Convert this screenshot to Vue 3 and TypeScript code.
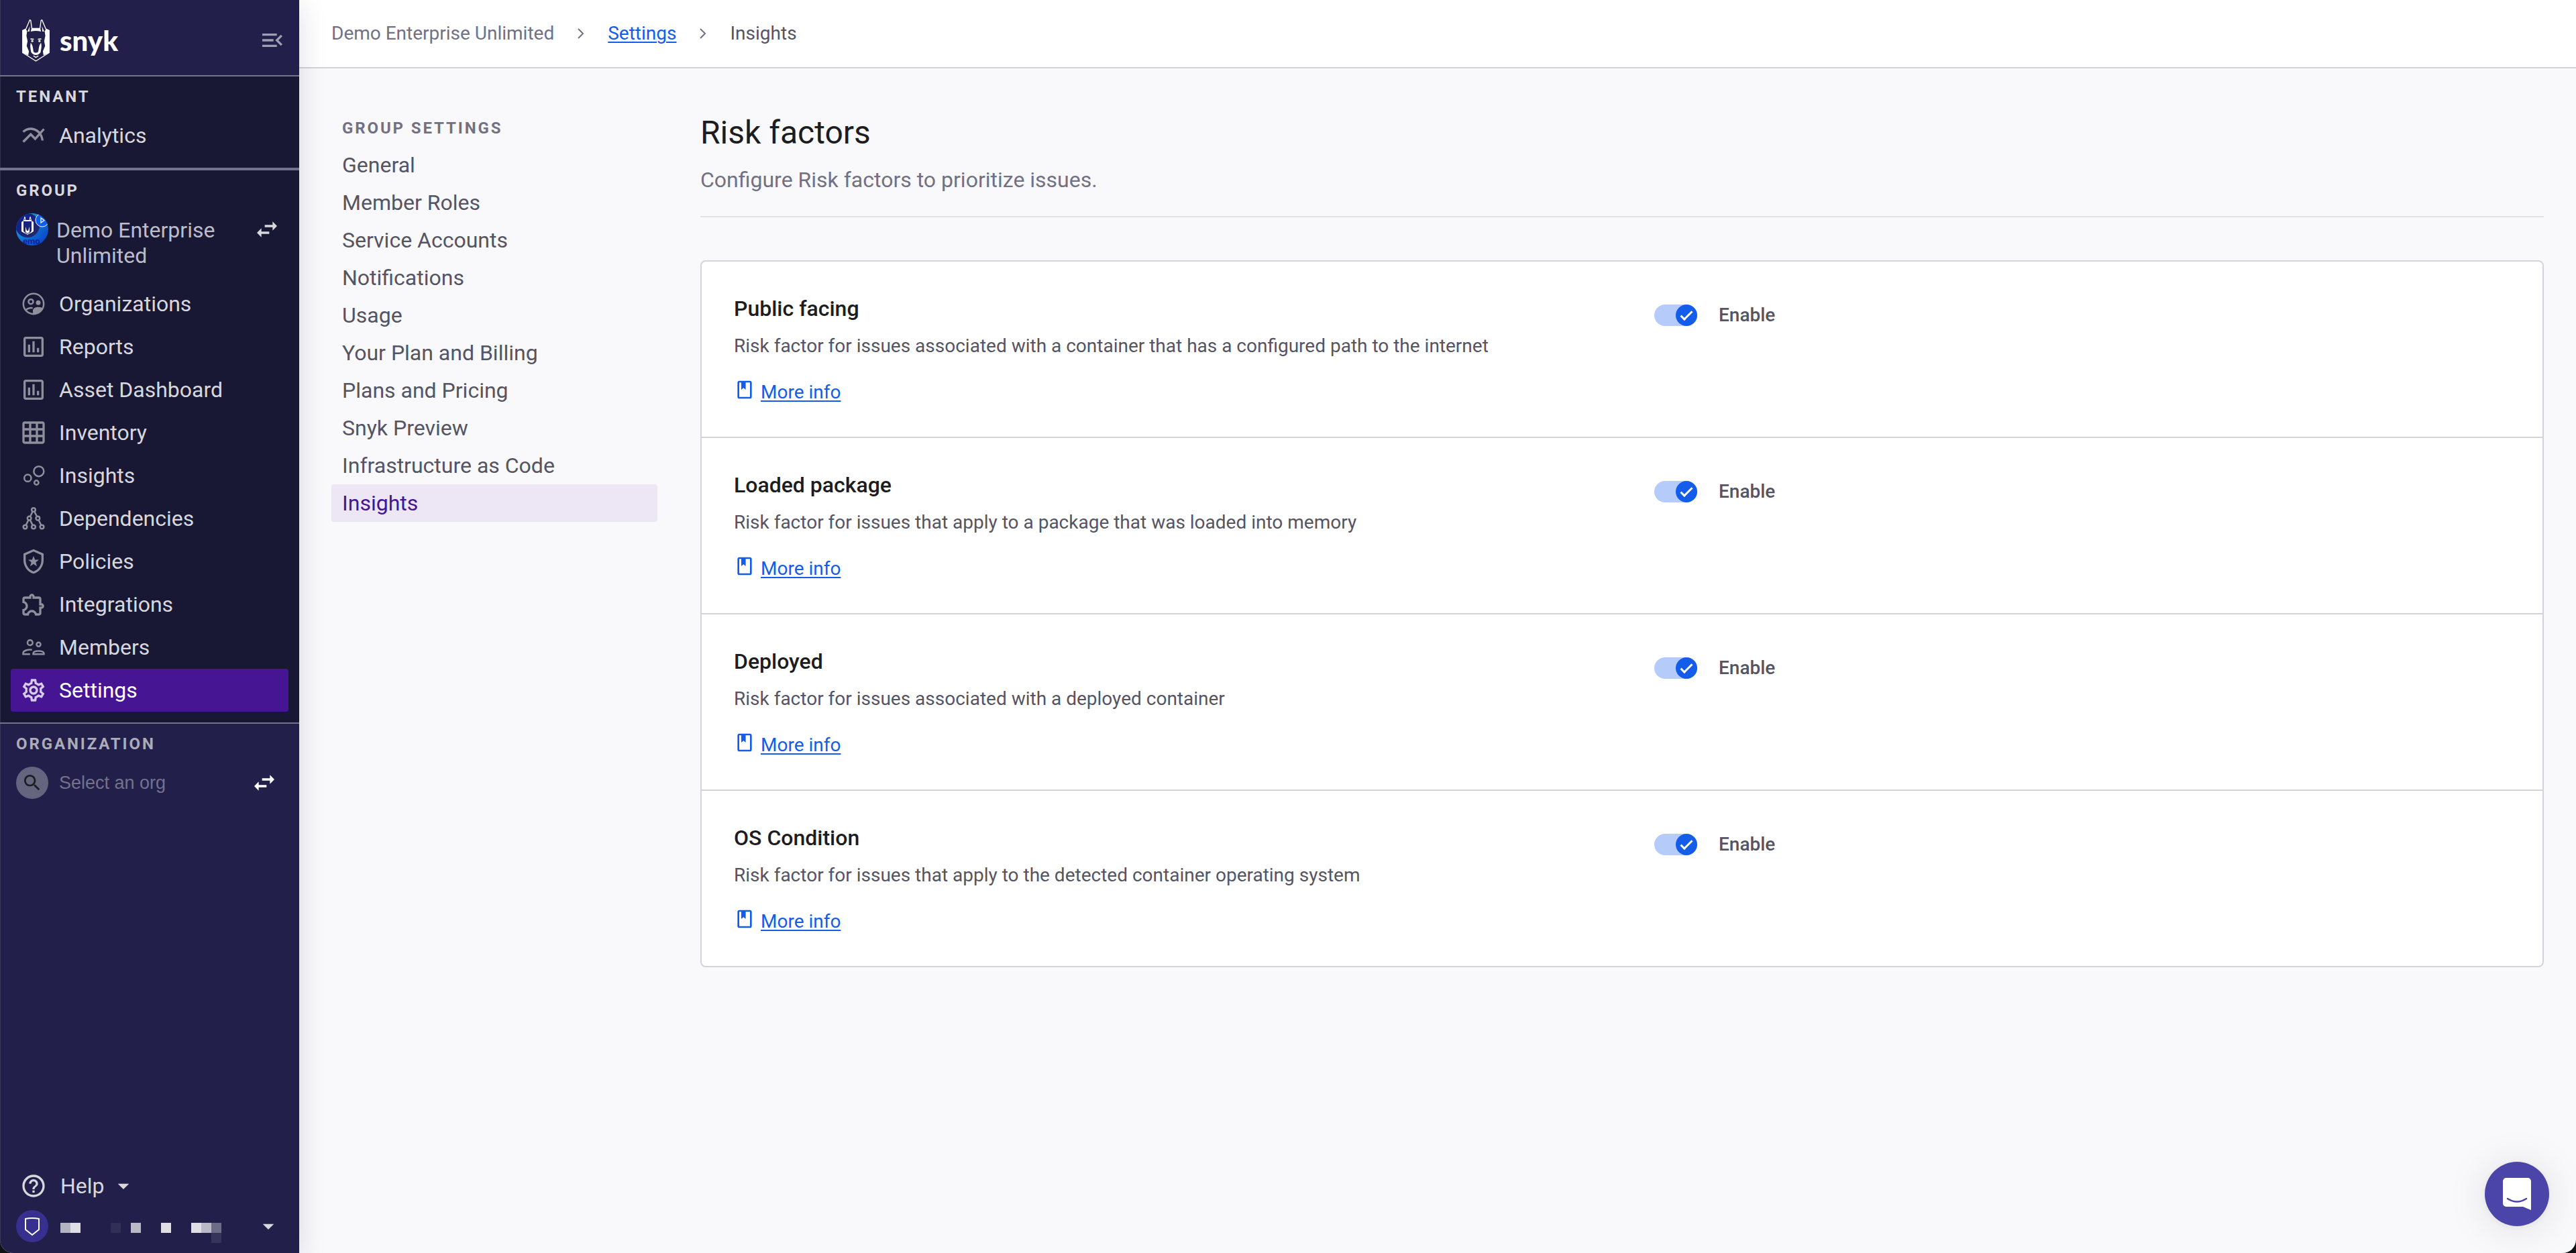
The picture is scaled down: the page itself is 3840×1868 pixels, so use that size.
<script setup lang="ts">
import { reactive } from 'vue'

interface Icon {
  fill?: string
  stroke?: string
}

interface NavItem {
  label: string
  icon: string
  active?: boolean
}

interface RiskFactor {
  id: string
  title: string
  description: string
  enabled: boolean
}

const ring = (x: number, y: number, r: number): string =>
  `M${x - r} ${y}a${r} ${r} 0 1 0 ${2 * r} 0a${r} ${r} 0 1 0 ${-2 * r} 0z`

const icons: Record<string, Icon> = {
  chart: {
    fill: 'M22 6.92l-1.41-1.41-2.85 3.21C15.68 6.4 12.83 5 9.61 5 6.72 5 4.07 6.16 2 8l1.42 1.42C5.12 7.93 7.27 7 9.61 7c2.74 0 5.09 1.26 6.77 3.24l-2.88 3.24-4-4L2 16.99l1.5 1.5 6-6.01 4 4 4.05-4.55c.75 1.35 1.25 2.9 1.44 4.55H21c-.22-2.3-.95-4.39-2.04-6.14L22 6.92z',
  },
  orgs: {
    fill:
      ring(16.2, 11, 2.1) +
      'M11.4 21.4v-3.3c0-2.1 2.4-3.2 4.8-3.2 1.9 0 3.4.4 4.4 1.3-1.4 3.2-4.8 5.3-9.2 5.2z',
    stroke: ring(12, 12, 9.1) + ring(9.6, 10, 2.1) + 'M5.2 17.6c1.2-1.4 3.2-2.1 6-1.9',
  },
  report: {
    fill: 'M9 17H7v-7h2v7zm4 0h-2V7h2v10zm4 0h-2v-4h2v4zm2 2H5V5h14v14zm0-16H5c-1.1 0-2 .9-2 2v14c0 1.1.9 2 2 2h14c1.1 0 2-.9 2-2V5c0-1.1-.9-2-2-2z',
  },
  grid: {
    fill: 'M20 2H4c-1.1 0-2 .9-2 2v16c0 1.1.9 2 2 2h16c1.1 0 2-.9 2-2V4c0-1.1-.9-2-2-2zM8 20H4v-4h4v4zm0-6H4v-4h4v4zm0-6H4V4h4v4zm6 12h-4v-4h4v4zm0-6h-4v-4h4v4zm0-6h-4V4h4v4zm6 12h-4v-4h4v4zm0-6h-4v-4h4v4zm0-6h-4V4h4v4z',
  },
  bubbles: { stroke: ring(16.7, 8.2, 4.5) + ring(6.8, 14.2, 3.1) + ring(14.6, 18.3, 1.9) },
  tree: {
    stroke:
      ring(12, 4.2, 1.7) + ring(8.2, 11.8, 1.7) + ring(15.8, 11.8, 1.7) +
      ring(4.5, 19.5, 1.7) + ring(12, 19.5, 1.7) + ring(19.5, 19.5, 1.7) +
      'M11.2 5.8L9 10.2M12.8 5.8L15 10.2M7.4 13.4L5.3 17.9M9 13.4L11.2 17.9M16.6 13.4L18.7 17.9',
  },
  shield: {
    fill:
      'M12 1L3 5v6c0 5.55 3.84 10.74 9 12 5.16-1.26 9-6.45 9-12V5l-9-4zm7 10c0 4.52-2.98 8.69-7 9.93-4.02-1.24-7-5.41-7-9.93V6.3l7-3.11 7 3.11V11z' +
      'M12 7.1l1.3 3.4h3.5l-2.8 2.2 1 3.6-3-2.1-3 2.1 1-3.6-2.8-2.2h3.5z',
  },
  puzzle: {
    fill: 'M10.5 4.5c.28 0 .5.22.5.5v2h6v6h2c.28 0 .5.22.5.5s-.22.5-.5.5h-2v6h-2.12c-.68-1.75-2.39-3-4.38-3s-3.7 1.25-4.38 3H4v-2.12c1.75-.68 3-2.39 3-4.38 0-1.99-1.24-3.7-2.99-4.38L4 7h6V5c0-.28.22-.5.5-.5m0-2C9.12 2.5 8 3.62 8 5H4c-1.1 0-1.99.9-1.99 2v3.8h.29c1.49 0 2.7 1.21 2.7 2.7s-1.21 2.7-2.7 2.7H2V20c0 1.1.9 2 2 2h3.8v-.3c0-1.49 1.21-2.7 2.7-2.7s2.7 1.21 2.7 2.7v.3H17c1.1 0 2-.9 2-2v-4c1.38 0 2.5-1.12 2.5-2.5S20.38 11 19 11V7c0-1.1-.9-2-2-2h-4c0-1.38-1.12-2.5-2.5-2.5z',
  },
  people: {
    stroke:
      ring(8.9, 7.9, 2.3) + ring(16.5, 9.5, 1.8) +
      'M10.6 14.2C7 13.7 2.7 15 2.7 17.3v.9h6.2M11.7 18.2v-.7c0-3 9.6-3 9.6 0v.7z',
  },
  gear: {
    fill: 'M19.43 12.98c.04-.32.07-.64.07-.98 0-.34-.03-.66-.07-.98l2.11-1.65c.19-.15.24-.42.12-.64l-2-3.46c-.09-.16-.26-.25-.44-.25-.06 0-.12.01-.17.03l-2.49 1c-.52-.4-1.08-.73-1.69-.98l-.38-2.65C14.46 2.18 14.25 2 14 2h-4c-.25 0-.46.18-.49.42l-.38 2.65c-.61.25-1.17.59-1.69.98l-2.49-1c-.06-.02-.12-.03-.18-.03-.17 0-.34.09-.43.25l-2 3.46c-.13.22-.07.49.12.64l2.11 1.65c-.04.32-.07.65-.07.98 0 .33.03.66.07.98l-2.11 1.65c-.19.15-.24.42-.12.64l2 3.46c.09.16.26.25.44.25.06 0 .12-.01.17-.03l2.49-1c.52.4 1.08.73 1.69.98l.38 2.65c.03.24.24.42.49.42h4c.25 0 .46-.18.49-.42l.38-2.65c.61-.25 1.17-.59 1.69-.98l2.49 1c.06.02.12.03.18.03.17 0 .34-.09.43-.25l2-3.46c.12-.22.07-.49-.12-.64l-2.11-1.65zm-1.98-1.71c.04.31.05.52.05.73 0 .21-.02.43-.05.73l-.14 1.13.89.7 1.08.84-.7 1.21-1.27-.51-1.04-.42-.9.68c-.43.32-.84.56-1.25.73l-1.06.43-.16 1.13-.2 1.35h-1.4l-.19-1.35-.16-1.13-1.06-.43c-.43-.18-.83-.41-1.23-.71l-.91-.7-1.06.43-1.27.51-.7-1.21 1.08-.84.89-.7-.14-1.13c-.03-.31-.05-.54-.05-.74s.02-.43.05-.73l.14-1.13-.89-.7-1.08-.84.7-1.21 1.27.51 1.04.42.9-.68c.43-.32.84-.56 1.25-.73l1.06-.43.16-1.13.2-1.35h1.39l.19 1.35.16 1.13 1.06.43c.43.18.83.41 1.23.71l.91.7 1.06-.43 1.27-.51.7 1.21-1.07.85-.89.7.14 1.13zM12 8c-2.21 0-4 1.79-4 4s1.79 4 4 4 4-1.79 4-4-1.79-4-4-4zm0 6c-1.1 0-2-.9-2-2s.9-2 2-2 2 .9 2 2-.9 2-2 2z',
  },
}

const swapPath = 'M6.99 11L3 15l3.99 4v-3H14v-2H6.99v-3zM21 9l-3.99-4v3H10v2h7.01v3L21 9z'

const groupNav: NavItem[] = [
  { label: 'Organizations', icon: 'orgs' },
  { label: 'Reports', icon: 'report' },
  { label: 'Asset Dashboard', icon: 'report' },
  { label: 'Inventory', icon: 'grid' },
  { label: 'Insights', icon: 'bubbles' },
  { label: 'Dependencies', icon: 'tree' },
  { label: 'Policies', icon: 'shield' },
  { label: 'Integrations', icon: 'puzzle' },
  { label: 'Members', icon: 'people' },
  { label: 'Settings', icon: 'gear', active: true },
]

const settingsNav: string[] = [
  'General',
  'Member Roles',
  'Service Accounts',
  'Notifications',
  'Usage',
  'Your Plan and Billing',
  'Plans and Pricing',
  'Snyk Preview',
  'Infrastructure as Code',
  'Insights',
]
const currentSetting = 'Insights'

const factors = reactive<RiskFactor[]>([
  {
    id: 'public-facing',
    title: 'Public facing',
    description: 'Risk factor for issues associated with a container that has a configured path to the internet',
    enabled: true,
  },
  {
    id: 'loaded-package',
    title: 'Loaded package',
    description: 'Risk factor for issues that apply to a package that was loaded into memory',
    enabled: true,
  },
  {
    id: 'deployed',
    title: 'Deployed',
    description: 'Risk factor for issues associated with a deployed container',
    enabled: true,
  },
  {
    id: 'os-condition',
    title: 'OS Condition',
    description: 'Risk factor for issues that apply to the detected container operating system',
    enabled: true,
  },
])

// Blocks of the masked user name: x, y, opacity
const maskBlocks: [number, number, number][] = [
  [0, 19, 0.66], [15, 19, 0.86], [75, 19, 0.07], [105, 19, 0.69], [150, 19, 0.86],
  [195, 19, 0.86], [210, 19, 0.69], [225, 19, 0.34], [225, 34, 0.09],
]
</script>

<template>
  <div class="app">
    <aside class="sidebar">
      <div class="brand">
        <a href="#" class="logo" aria-label="Snyk home">
          <svg class="logo-mark" viewBox="0 0 122 188" aria-hidden="true">
            <g fill="#fff">
              <path d="M0 48L14 41 22 52 19 72 24 96 20 118 30 142 27 160 0 148z" />
              <path d="M122 48L108 41 100 52 103 72 98 96 102 118 92 142 95 160 122 148z" />
              <path d="M42 38H80L84 54C70 50 52 50 38 54z" />
              <path d="M38 104C46 112 48 126 50 142 53 151 69 151 72 142 74 126 76 112 84 104 88 122 84 134 82 146 76 154 70 158 61 158 52 158 46 154 40 146 38 134 34 122 38 104z" />
              <path d="M24 54L34 30 32 54zM98 54L88 30 90 54z" />
              <path d="M38 84L52 86 52 90 36 89zM84 84L70 86 70 90 86 89z" />
            </g>
            <g fill="none" stroke="#fff" stroke-width="4">
              <path d="M1 147L61 185 121 147" />
              <path d="M15 46L34 2 38 4 43 40M107 46L88 2 84 4 79 40" />
              <path d="M50 162L61 169 72 162" />
              <circle cx="45" cy="96" r="3" />
              <circle cx="77" cy="96" r="3" />
            </g>
          </svg>
          <span class="logo-word">snyk</span>
        </a>
        <button type="button" class="icon-button collapse" aria-label="Collapse navigation">
          <svg class="icon" viewBox="0 0 24 24"><path d="M3 18h13v-2H3v2zm0-5h10v-2H3v2zm0-7v2h13V6H3zm18 9.59L17.42 12 21 8.41 19.59 7l-5 5 5 5L21 15.59z" /></svg>
        </button>
      </div>

      <section class="nav-section tenant">
        <h2 class="nav-title">TENANT</h2>
        <nav class="nav-list">
          <a href="#" class="nav-item">
            <svg class="icon" viewBox="0 0 24 24"><path :d="icons.chart.fill" /></svg>
            <span>Analytics</span>
          </a>
        </nav>
      </section>

      <section class="nav-section group">
        <h2 class="nav-title">GROUP</h2>
        <div class="group-picker">
          <svg class="avatar" viewBox="0 0 48 48" aria-hidden="true">
            <defs>
              <clipPath id="avatar-clip"><circle cx="24" cy="24" r="24" /></clipPath>
              <linearGradient id="avatar-sky" x1="0" y1="0" x2="1" y2="1">
                <stop offset="0" stop-color="#17b4e8" />
                <stop offset="1" stop-color="#0b35c4" />
              </linearGradient>
              <linearGradient id="avatar-disc" x1="0" y1="0" x2="1" y2="1">
                <stop offset="0" stop-color="#0a1f9e" />
                <stop offset="1" stop-color="#2a2a5c" />
              </linearGradient>
            </defs>
            <g clip-path="url(#avatar-clip)">
              <rect width="48" height="48" fill="url(#avatar-sky)" />
              <circle cx="17" cy="18" r="18" fill="url(#avatar-disc)" />
              <circle cx="39" cy="10" r="10" fill="#0f5fef" stroke="#fff" stroke-width="1" />
              <path d="M37 7v7l5-3.500z" fill="none" stroke="#fff" stroke-width="1.200" />
              <path d="M8 13l3-2v15l2 4-5-3zM26 13l-3-2v15l-2 4 5-3zM12 10h10v2H12zM14 20l2 6h2l2-6v8l-3 2-3-2z" fill="#fff" />
              <path d="M11 12l2-7 1 6M23 12l-2-7-1 6M8 26l9 5.500 9-5.500" fill="none" stroke="#fff" />
              <text x="10" y="46" font-size="13" font-weight="700" fill="#0a1f9e">emo</text>
            </g>
          </svg>
          <span class="group-name">Demo Enterprise Unlimited</span>
          <button type="button" class="icon-button" aria-label="Switch group">
            <svg class="icon" viewBox="0 0 24 24"><path :d="swapPath" /></svg>
          </button>
        </div>
        <nav class="nav-list">
          <a
            v-for="item in groupNav"
            :key="item.label"
            href="#"
            class="nav-item"
            :class="{ active: item.active }"
          >
            <svg class="icon" viewBox="0 0 24 24">
              <path v-if="icons[item.icon].fill" :d="icons[item.icon].fill" />
              <path v-if="icons[item.icon].stroke" class="line" :d="icons[item.icon].stroke" />
            </svg>
            <span>{{ item.label }}</span>
          </a>
        </nav>
      </section>

      <section class="nav-section organization">
        <h2 class="nav-title">ORGANIZATION</h2>
        <div class="org-picker">
          <label class="org-search" for="org-search" aria-label="Select an org">
            <svg viewBox="0 0 24 24"><path d="M15.5 14h-.79l-.28-.27C15.41 12.59 16 11.11 16 9.5 16 5.91 13.09 3 9.5 3S3 5.91 3 9.5 5.91 16 9.5 16c1.61 0 3.09-.59 4.23-1.57l.27.28v.79l5 4.99L20.49 19l-4.99-5zm-6 0C7.01 14 5 11.99 5 9.5S7.01 5 9.5 5 14 7.01 14 9.5 11.99 14 9.5 14z" /></svg>
          </label>
          <input id="org-search" class="org-input" type="text" placeholder="Select an org" />
          <button type="button" class="icon-button bright" aria-label="Switch organization">
            <svg class="icon" viewBox="0 0 24 24"><path :d="swapPath" /></svg>
          </button>
        </div>
      </section>

      <div class="sidebar-footer">
        <button type="button" class="help">
          <svg class="icon" viewBox="0 0 24 24"><path d="M11 18h2v-2h-2v2zm1-16C6.48 2 2 6.48 2 12s4.48 10 10 10 10-4.48 10-10S17.52 2 12 2zm0 18c-4.41 0-8-3.59-8-8s3.59-8 8-8 8 3.59 8 8-3.59 8-8 8zm0-14c-2.21 0-4 1.79-4 4h2c0-1.1.9-2 2-2s2 .9 2 2c0 2-3 1.75-3 5h2c0-2.25 3-2.5 3-5 0-2.21-1.79-4-4-4z" /></svg>
          <span>Help</span>
          <svg class="icon caret" viewBox="0 0 24 24"><path d="M7 10l5 5 5-5z" /></svg>
        </button>
        <button type="button" class="user" aria-label="User menu">
          <svg class="user-avatar" viewBox="0 0 48 48">
            <circle cx="24" cy="24" r="24" fill="#38308f" />
            <path d="M14 13Q24 11 34 13V29L24 37 14 29z" fill="none" stroke="#fff" stroke-width="2" />
          </svg>
          <svg class="user-name" viewBox="0 0 240 49">
            <rect
              v-for="[x, y, o] in maskBlocks"
              :key="`${x}-${y}`"
              :x="x"
              :y="y"
              width="15"
              height="15"
              fill="#fff"
              :fill-opacity="o"
            />
          </svg>
          <svg class="icon" viewBox="0 0 24 24"><path d="M7 10l5 5 5-5z" /></svg>
        </button>
      </div>
    </aside>

    <div class="page">
      <header class="topbar">
        <nav class="breadcrumbs" aria-label="Breadcrumb">
          <span class="crumb">Demo Enterprise Unlimited</span>
          <svg class="chevron" viewBox="0 0 12 18"><path d="M2 2l7 7-7 7" /></svg>
          <a href="#" class="link">Settings</a>
          <svg class="chevron" viewBox="0 0 12 18"><path d="M2 2l7 7-7 7" /></svg>
          <span class="crumb current">Insights</span>
        </nav>
      </header>

      <div class="body">
        <nav class="settings-nav" aria-label="Group settings">
          <h2 class="settings-title">GROUP SETTINGS</h2>
          <a
            v-for="label in settingsNav"
            :key="label"
            href="#"
            class="settings-item"
            :class="{ active: label === currentSetting }"
          >{{ label }}</a>
        </nav>

        <main class="content">
          <div class="intro">
            <h1>Risk factors</h1>
            <p>Configure Risk factors to prioritize issues.</p>
          </div>

          <div class="card">
            <section v-for="factor in factors" :key="factor.id" class="factor">
              <div class="factor-text">
                <h2>{{ factor.title }}</h2>
                <p>{{ factor.description }}</p>
                <div class="more">
                  <svg viewBox="0 0 24 24" aria-hidden="true"><path fill-rule="evenodd" d="M18 2H6c-1.1 0-2 .9-2 2v16c0 1.1.9 2 2 2h12c1.1 0 2-.9 2-2V4c0-1.1-.9-2-2-2zM6 4h2.2v8l2.500-2 2.500 2V4H18v16H6z" /></svg>
                  <a href="#" class="link">More info</a>
                </div>
              </div>
              <div class="factor-control">
                <label class="toggle">
                  <input v-model="factor.enabled" type="checkbox" role="switch" />
                  <span>Enable</span>
                </label>
              </div>
            </section>
          </div>
        </main>
      </div>
    </div>

    <button type="button" class="chat" aria-label="Open chat">
      <svg viewBox="0 0 42 48">
        <path d="M5 0h32a5 5 0 0 1 5 5v43l-12-5H5a5 5 0 0 1-5-5V5a5 5 0 0 1 5-5z" fill="#fff" />
        <path d="M7 31q14 9 28 0" fill="none" stroke="#4c45a9" stroke-width="2.500" stroke-linecap="round" />
      </svg>
    </button>
  </div>
</template>

<style>
body {
  background: #101214;
}
</style>

<style scoped>
.app {
  display: flex;
  min-height: 100vh;
  overflow: hidden;
  border-radius: 0 0 20px 20px;
  background: #f9f9fb;
  color: #555463;
  font-family: Roboto, 'Liberation Sans', sans-serif;
  font-size: 28px;
}

.app *,
.app *::before,
.app *::after {
  box-sizing: border-box;
}

h1,
h2,
p {
  margin: 0;
}

a {
  color: inherit;
  text-decoration: none;
}

button {
  padding: 0;
  border: 0;
  background: none;
  color: inherit;
  font: inherit;
  text-align: left;
  cursor: pointer;
}

svg {
  display: block;
  flex: none;
  fill: currentColor;
}

.icon {
  width: 40px;
  height: 40px;
}

.icon .line {
  fill: none;
  stroke: currentColor;
  stroke-width: 1.5;
}

/* Sidebar */
.sidebar {
  position: relative;
  z-index: 1;
  display: flex;
  flex: none;
  flex-direction: column;
  width: 446px;
  background: #22204a;
  box-shadow: inset 1px 0 #3b3a5e, 0 8px 40px rgba(28, 24, 66, 0.14);
  color: #d7d7dc;
  font-size: 32px;
}

.brand {
  display: flex;
  align-items: center;
  justify-content: space-between;
  height: 114px;
  padding: 8px 20px 0 33px;
  border-bottom: 2px solid #73728a;
}

.logo {
  display: flex;
  align-items: center;
  gap: 15px;
  color: #fff;
}

.logo-mark {
  width: 41px;
  height: 63px;
}

.logo-word {
  font-family: Lato, 'Open Sans', sans-serif;
  font-size: 42px;
  font-weight: 900;
  line-height: 48px;
}

.icon-button {
  flex: none;
}

.icon-button.bright {
  color: #fff;
}

.collapse {
  color: #a09fb2;
}

.nav-section {
  padding-top: 16px;
}

.tenant,
.group {
  background: #181834;
  box-shadow: inset 1px 0 #31314b;
}

.tenant {
  padding-bottom: 16px;
  border-bottom: 4px solid #73728a;
}

.group {
  padding-bottom: 16px;
  border-bottom: 2px solid #73728a;
}

.nav-title {
  padding: 0 24px;
  font-size: 24px;
  font-weight: 700;
  letter-spacing: 0.12em;
  line-height: 28px;
}

.organization .nav-title {
  color: #acabba;
}

.tenant .nav-list {
  padding-top: 12px;
}

.nav-list {
  display: flex;
  flex-direction: column;
  padding: 0 16px;
}

.nav-item {
  display: flex;
  align-items: center;
  gap: 18px;
  height: 64px;
  padding: 0 14px;
  border-radius: 4px;
  line-height: 40px;
}

.nav-item .icon {
  color: #8f8e9c;
}

.nav-item.active {
  background: #451594;
  color: #fff;
}

.nav-item.active .icon {
  color: #d6cbe8;
}

.group-picker {
  display: flex;
  align-items: flex-start;
  padding: 20px 28px 21px 24px;
}

.group-picker .icon-button {
  margin-top: 4px;
}

.avatar {
  width: 48px;
  height: 48px;
}

.group-name {
  flex: 1;
  padding: 6px 40px 0 12px;
  color: #bdbcc8;
  line-height: 38px;
}

.org-picker {
  display: flex;
  align-items: center;
  gap: 16px;
  padding: 20px 32px 0 24px;
}

.org-search {
  display: grid;
  flex: none;
  place-items: center;
  width: 48px;
  height: 48px;
  border-radius: 50%;
  background: #666580;
  color: #1c1c21;
}

.org-search svg {
  width: 32px;
  height: 32px;
}

.org-input {
  flex: 1;
  min-width: 0;
  padding: 0;
  border: 0;
  outline: 0;
  background: none;
  color: #d7d7dc;
  font-family: 'Liberation Sans', Arial, sans-serif;
  font-size: 27px;
}

.org-input::placeholder {
  color: #73728a;
  opacity: 1;
}

.sidebar-footer {
  display: flex;
  flex-direction: column;
  gap: 12px;
  margin-top: auto;
  padding: 24px 26px 16px 24px;
}

.help {
  display: flex;
  align-items: center;
  gap: 20px;
  height: 48px;
  padding-left: 6px;
}

.help .caret {
  margin-left: -12px;
}

.user {
  display: flex;
  align-items: center;
  gap: 18px;
  height: 48px;
}

.user-avatar {
  width: 48px;
  height: 48px;
}

.user-name {
  width: 240px;
  height: 49px;
  margin-right: auto;
}

/* Top bar */
.page {
  flex: 1;
  min-width: 0;
}

.topbar {
  display: flex;
  align-items: center;
  height: 102px;
  padding: 0 48px;
  border-bottom: 2px solid #d3d3d9;
  background: #fff;
}

.breadcrumbs {
  display: flex;
  align-items: center;
  gap: 34px;
  line-height: 40px;
}

.crumb {
  color: #727184;
}

.crumb.current {
  color: #555463;
}

.chevron {
  width: 12px;
  height: 18px;
  fill: none;
  stroke: #727184;
  stroke-width: 2;
}

.link {
  color: #145deb;
  text-decoration: underline;
  text-decoration-thickness: 2px;
  text-underline-offset: 3px;
}

/* Settings page */
.body {
  display: flex;
  gap: 64px;
  padding: 64px 48px;
}

.settings-nav {
  display: flex;
  flex: none;
  flex-direction: column;
  width: 486px;
  padding-top: 10px;
}

.settings-title {
  margin-bottom: 12px;
  padding: 0 16px;
  color: #727184;
  font-size: 24px;
  font-weight: 700;
  letter-spacing: 0.12em;
  line-height: 30px;
}

.settings-item {
  padding: 0 16px;
  border-radius: 4px;
  font-size: 32px;
  line-height: 56px;
}

.settings-item.active {
  background: #ece6f5;
  color: #451594;
}

.content {
  flex: 1;
  min-width: 0;
}

.intro {
  margin-bottom: 64px;
  padding-bottom: 32px;
  border-bottom: 2px solid #e4e4e7;
}

.intro h1 {
  color: #1c1c21;
  font-size: 48px;
  font-weight: 400;
  line-height: 64px;
}

.intro p {
  margin-top: 16px;
  color: #727184;
  font-size: 32px;
  line-height: 44px;
}

.card {
  border: 2px solid #d3d3d9;
  border-radius: 8px;
  background: #fff;
}

.factor {
  display: grid;
  grid-template-columns: 1fr 1fr;
}

.factor + .factor {
  border-top: 2px solid #d3d3d9;
}

.factor-text {
  padding: 48px 48px 46px;
}

.factor-text h2 {
  color: #1c1c21;
  font-size: 32px;
  font-weight: 500;
  line-height: 44px;
}

.factor-text p {
  margin: 13px 0 28px;
  line-height: 42px;
}

.more {
  display: flex;
  gap: 8px;
  line-height: 40px;
}

.more svg {
  width: 32px;
  height: 32px;
  color: #145deb;
}

.factor-control {
  padding: 62px 48px;
}

.toggle {
  display: inline-flex;
  align-items: center;
  gap: 32px;
  font-weight: 500;
  line-height: 36px;
  cursor: pointer;
}

.toggle input {
  position: relative;
  width: 64px;
  height: 32px;
  margin: 0;
  border-radius: 16px;
  appearance: none;
  background: #d3d3d9;
}

.toggle input::before {
  position: absolute;
  top: 0;
  left: 0;
  width: 32px;
  height: 32px;
  border-radius: 50%;
  background: #727184;
  content: '';
}

.toggle input:checked {
  background: #b5cbfa;
}

.toggle input:checked::before {
  left: 32px;
  background: #145deb;
}

.toggle input:checked::after {
  position: absolute;
  top: 10px;
  left: 39px;
  width: 18px;
  height: 9px;
  border: solid #fff;
  border-width: 0 0 3px 3px;
  content: '';
  transform: rotate(-45deg);
}

/* Chat launcher */
.chat {
  position: fixed;
  right: 40px;
  bottom: 40px;
  z-index: 2;
  display: grid;
  place-items: center;
  width: 96px;
  height: 96px;
  border-radius: 50%;
  background: #4c45a9;
  box-shadow: 0 4px 64px rgba(0, 0, 0, 0.1), 0 2px 12px rgba(0, 0, 0, 0.06);
}

.chat svg {
  width: 42px;
  height: 48px;
}
</style>
